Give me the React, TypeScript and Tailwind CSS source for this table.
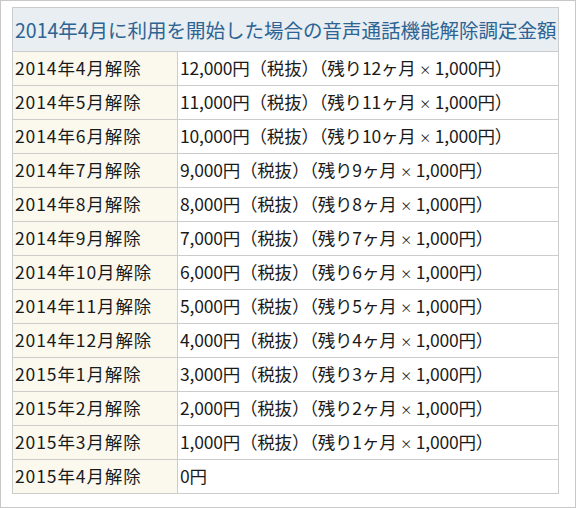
import React from 'react';

const rows: [string, string, string | null][] = [
  ['2014年4月解除', '12,000円（税抜）（残り12ヶ月', '1,000円）'],
  ['2014年5月解除', '11,000円（税抜）（残り11ヶ月', '1,000円）'],
  ['2014年6月解除', '10,000円（税抜）（残り10ヶ月', '1,000円）'],
  ['2014年7月解除', '9,000円（税抜）（残り9ヶ月', '1,000円）'],
  ['2014年8月解除', '8,000円（税抜）（残り8ヶ月', '1,000円）'],
  ['2014年9月解除', '7,000円（税抜）（残り7ヶ月', '1,000円）'],
  ['2014年10月解除', '6,000円（税抜）（残り6ヶ月', '1,000円）'],
  ['2014年11月解除', '5,000円（税抜）（残り5ヶ月', '1,000円）'],
  ['2014年12月解除', '4,000円（税抜）（残り4ヶ月', '1,000円）'],
  ['2015年1月解除', '3,000円（税抜）（残り3ヶ月', '1,000円）'],
  ['2015年2月解除', '2,000円（税抜）（残り2ヶ月', '1,000円）'],
  ['2015年3月解除', '1,000円（税抜）（残り1ヶ月', '1,000円）'],
  ['2015年4月解除', '0円', null],
];

export default function App() {
  return (
    <div className="w-[576px] h-[508px] bg-white font-['Noto_Sans_CJK_JP',sans-serif]">
      <div className="w-full h-full border border-[#c8c8c8] pl-[11px] pt-[6px] pr-[16px] pb-[14px]">
        <table className="w-[547px] border-collapse table-fixed">
          <colgroup>
            <col className="w-[165px]" />
            <col />
          </colgroup>
          <thead>
            <tr className="h-[44px]">
              <th
                colSpan={2}
                className="border border-[#cccccc] bg-[#e8eef2] px-[2px] text-left font-normal text-[19.5px] text-[#2d6494] whitespace-nowrap"
              >
                2014年4月に利用を開始した場合の音声通話機能解除調定金額
              </th>
            </tr>
          </thead>
          <tbody>
            {rows.map(([month, amount, unit]) => (
              <tr key={month} className="h-[34px]">
                <td className="border border-[#cccccc] bg-[#fbf9ee] px-[2px] text-[17.5px] tracking-[0.9px] text-[#1a1a1a] whitespace-nowrap">
                  {month}
                </td>
                <td className="border border-[#cccccc] bg-white px-[2px] text-[17.5px] tracking-[-0.2px] text-[#1a1a1a] whitespace-nowrap">
                  {amount}
                  {unit && (
                    <>
                      {' '}
                      <span className="text-[12px]">×</span> {unit}
                    </>
                  )}
                </td>
              </tr>
            ))}
          </tbody>
        </table>
      </div>
    </div>
  );
}
